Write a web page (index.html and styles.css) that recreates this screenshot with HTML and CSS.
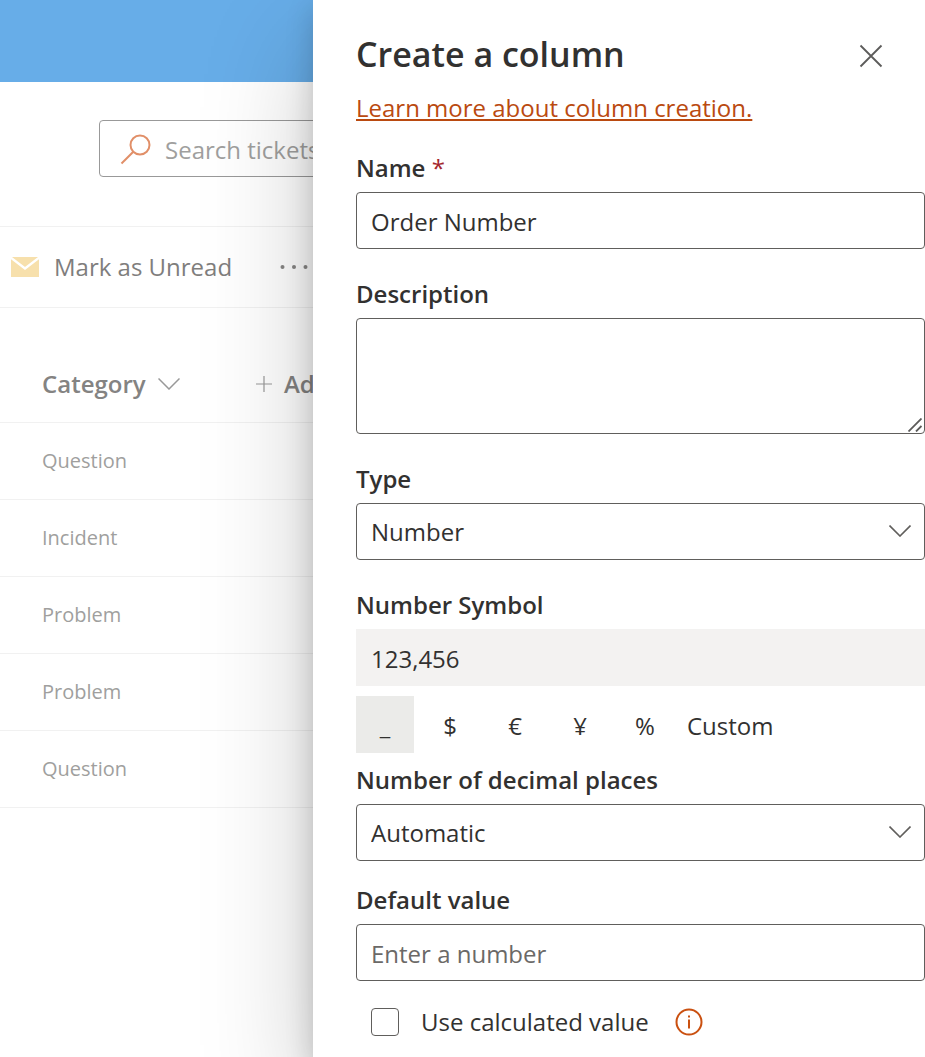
FILE: index.html
```html
<!DOCTYPE html>
<html lang="en">
<head>
<meta charset="utf-8">
<title>Create a column</title>
<link rel="stylesheet" href="styles.css">
</head>
<body>
<div class="layout">
  <main class="page">
    <div class="banner"></div>
    <div class="search-row">
      <label class="search">
        <svg width="32" height="32" viewBox="0 0 32 32" fill="none" stroke="#e18f68" stroke-width="2"><circle cx="20" cy="11" r="9.500"/><path d="M13.300 17.700L1.500 29.500"/></svg>
        <input class="search-input" type="search" placeholder="Search tickets" aria-label="Search tickets">
      </label>
    </div>
    <div class="toolbar">
      <button class="command" type="button">
        <svg width="28" height="20" viewBox="0 0 28 20"><path fill="#f7e0ac" d="M0 0h28v20H0z"/><path d="M-1 0L14 11.500L29 0" fill="none" stroke="#fff" stroke-width="2.400"/></svg>
        <span>Mark as Unread</span>
      </button>
      <button class="more" type="button" aria-label="More commands">
        <svg width="28" height="6" viewBox="0 0 28 6" fill="#878685"><circle cx="2.500" cy="3" r="2"/><circle cx="14" cy="3" r="2"/><circle cx="25.500" cy="3" r="2"/></svg>
      </button>
    </div>
    <table class="tickets">
      <thead>
        <tr>
          <th class="category"><button class="head-button" type="button">Category
            <svg width="22" height="12" viewBox="0 0 22 12" fill="none" stroke="#999" stroke-width="1.500"><path d="M.5.500L11 11L21.500.500"/></svg></button></th>
          <th><button class="head-button" type="button">
            <svg width="16" height="16" viewBox="0 0 16 16" stroke="#999" stroke-width="1.200"><path d="M8 0v16M0 8h16"/></svg>
            Add column</button></th>
        </tr>
      </thead>
      <tbody>
        <tr><td>Question</td><td></td></tr>
        <tr><td>Incident</td><td></td></tr>
        <tr><td>Problem</td><td></td></tr>
        <tr><td>Problem</td><td></td></tr>
        <tr><td>Question</td><td></td></tr>
      </tbody>
    </table>
  </main>

  <aside class="panel" aria-labelledby="panel-title">
    <header class="panel-head">
      <h1 class="title" id="panel-title">Create a column</h1>
      <button class="close" type="button" aria-label="Close">
        <svg width="24" height="24" viewBox="0 0 24 24" fill="none" stroke="#5c5b5a" stroke-width="1.800"><path d="M1.500 1.500l21 21M22.500 1.500l-21 21"/></svg>
      </button>
    </header>
    <a class="learn" href="#">Learn more about column creation.</a>

    <form class="form">
      <div class="field">
        <label class="label" for="name">Name <span class="required">*</span></label>
        <input class="control" id="name" type="text" value="Order Number">
      </div>
      <div class="field">
        <label class="label" for="description">Description</label>
        <div class="area-wrap">
          <textarea class="control area" id="description"></textarea>
          <svg class="grip" width="14" height="14" viewBox="0 0 14 14" stroke="#5c5b5a" stroke-width="1.800"><path d="M.5 13.500L13.500.500M8 13.500L13.500 8"/></svg>
        </div>
      </div>
      <div class="field">
        <label class="label" for="type">Type</label>
        <div class="select-wrap">
          <select class="control select" id="type"><option>Number</option></select>
          <svg class="chevron" width="22" height="12" viewBox="0 0 22 12" fill="none" stroke="#605e5c" stroke-width="1.600"><path d="M.5.500L11 11L21.500.500"/></svg>
        </div>
      </div>
      <div class="field symbols-field">
        <label class="label" for="sample">Number Symbol</label>
        <input class="control sample" id="sample" type="text" value="123,456" readonly>
        <div class="symbols">
          <button class="symbol selected" type="button">_</button>
          <button class="symbol" type="button">$</button>
          <button class="symbol" type="button">€</button>
          <button class="symbol" type="button">¥</button>
          <button class="symbol" type="button">%</button>
          <button class="symbol custom" type="button">Custom</button>
        </div>
      </div>
      <div class="field decimals-field">
        <label class="label" for="decimals">Number of decimal places</label>
        <div class="select-wrap">
          <select class="control select" id="decimals"><option>Automatic</option></select>
          <svg class="chevron" width="22" height="12" viewBox="0 0 22 12" fill="none" stroke="#605e5c" stroke-width="1.600"><path d="M.5.500L11 11L21.500.500"/></svg>
        </div>
      </div>
      <div class="field">
        <label class="label" for="default">Default value</label>
        <input class="control" id="default" type="text" placeholder="Enter a number">
      </div>
      <div class="calculated">
        <input class="check" id="calculated" type="checkbox">
        <label for="calculated">Use calculated value</label>
        <button class="info" type="button" aria-label="About calculated values">
          <svg width="28" height="28" viewBox="0 0 28 28" fill="none" stroke="#ca5010" stroke-width="2"><circle cx="14" cy="14" r="12.500"/><path d="M14 11.500V20.500M14 7.500V9.500"/></svg>
        </button>
      </div>
    </form>
  </aside>
</div>
</body>
</html>
```
FILE: styles.css
```css
* { box-sizing: border-box; }

body {
  margin: 0;
  background: #fff;
  color: #323130;
  font: 24px/36px "Open Sans", "Noto Sans", sans-serif;
}

button, input, select, textarea { font: inherit; color: inherit; }
button { border: 0; padding: 0; background: none; cursor: pointer; }
svg { display: block; flex: none; }

.layout {
  display: grid;
  grid-template-columns: 313px minmax(0, 1fr);
  min-height: 100vh;
  overflow: hidden;
}

.page { overflow: hidden; }
.banner { height: 82px; background: #67ade8; }

.search-row {
  padding: 38px 0 49px 99px;
  border-bottom: 1px solid #f1f1f1;
}
.search {
  display: flex;
  align-items: center;
  gap: 13px;
  width: 420px;
  height: 57px;
  padding: 2px 20px 0;
  border: 1px solid #999;
  border-radius: 4px;
}
.search-input {
  flex: 1;
  min-width: 0;
  padding: 0;
  border: 0;
  background: none;
  outline: 0;
}
.search-input::placeholder { color: #a09f9e; opacity: 1; }

.toolbar {
  display: flex;
  align-items: center;
  gap: 48px;
  height: 81px;
  padding-left: 11px;
  border-bottom: 1px solid #f1f1f1;
  color: #7f7e7d;
}
.command {
  display: flex;
  align-items: center;
  gap: 15px;
  white-space: nowrap;
}

.tickets {
  width: 480px;
  border-collapse: collapse;
  table-layout: fixed;
}
.tickets th {
  height: 114px;
  padding: 39px 0 0;
  color: #848382;
  font-weight: 600;
  text-align: left;
}
.tickets .category { width: 256px; padding-left: 42px; }
.head-button {
  display: flex;
  align-items: center;
  gap: 12px;
  font-weight: 600;
}
.tickets td {
  height: 77px;
  padding: 0 0 0 42px;
  color: #a09f9e;
  font-size: 20px;
}
.tickets tr { border-bottom: 1px solid #f1f1f1; }

.panel {
  z-index: 1;
  padding: 30px 0 20px 43px;
  background: #fff;
  box-shadow: 0 46px 104px rgba(0, 0, 0, .22), 0 9px 26px rgba(0, 0, 0, .18);
}
.panel-head {
  display: flex;
  align-items: center;
  justify-content: space-between;
  padding-right: 42px;
  margin-bottom: 12px;
}
.title { margin: 0; font-size: 34px; line-height: 48px; font-weight: 600; }
.close { padding-top: 4px; }
.learn {
  display: block;
  width: fit-content;
  color: #ba4a10;
  text-decoration-thickness: 2px;
  text-underline-offset: 2px;
  text-decoration-skip-ink: none;
}

.form { display: flex; flex-direction: column; gap: 27px; margin-top: 24px; }
.field { display: flex; flex-direction: column; gap: 6px; }
.label { font-weight: 600; }
.required { color: #a4262c; font-weight: 400; }
.control {
  display: block;
  width: 100%;
  height: 57px;
  padding: 2px 14px 0;
  border: 1px solid #605e5c;
  border-radius: 4px;
  background: #fff;
  outline: 0;
}
.control::placeholder { color: #6b6967; opacity: 1; }
.area-wrap, .select-wrap { position: relative; }
.area { height: 116px; padding: 9px 14px; resize: none; }
.grip { position: absolute; right: 3px; bottom: 2px; }
.select { appearance: none; padding-top: 0; }
.chevron { position: absolute; right: 14px; top: 22px; pointer-events: none; }
.sample { border: 0; border-radius: 0; padding-left: 15px; background: #f3f2f1; }
.symbols { display: flex; gap: 7px; margin-top: 4px; }
.symbol { min-width: 58px; height: 57px; padding-top: 2px; }
.custom { padding-left: 6px; }
.selected { background: #ebebe9; }
.decimals-field { margin-top: -18px; margin-bottom: -6px; }

.calculated { display: flex; align-items: center; padding-left: 15px; margin-top: -4px; }
.check {
  appearance: none;
  width: 28px;
  height: 28px;
  margin: 0 22px 0 0;
  border: 1px solid #605e5c;
  border-radius: 4px;
}
.info { margin-left: 26px; }
```
